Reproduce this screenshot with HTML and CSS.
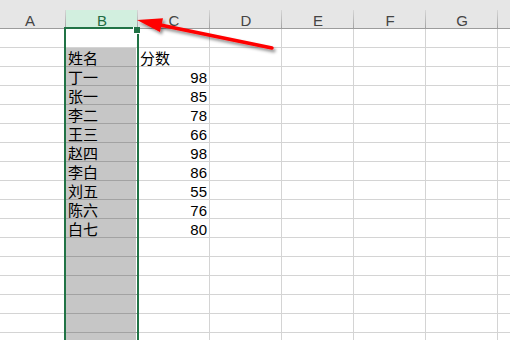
FILE: index.html
```html
<!DOCTYPE html>
<html lang="zh-CN">
<head>
    <meta charset="UTF-8">
    <meta name="viewport" content="width=device-width, initial-scale=1.0">
    <title>工作表</title>
    <link rel="stylesheet" href="styles.css">
</head>
<body>

    <div class="sheet">
        <!-- 列标题 -->
        <div class="head">
            <div class="hc">A</div>
            <div class="hc hsel">B</div>
            <div class="hc">C</div>
            <div class="hc">D</div>
            <div class="hc">E</div>
            <div class="hc">F</div>
            <div class="hc">G</div>
            <div class="hc"></div>
        </div>

        <!-- 数据行 -->
        <div class="row"><div class="c"></div><div class="c act"></div><div class="c"></div><div class="c"></div><div class="c"></div><div class="c"></div><div class="c"></div><div class="c"></div></div>
        <div class="row"><div class="c"></div><div class="c sel">姓名</div><div class="c">分数</div><div class="c"></div><div class="c"></div><div class="c"></div><div class="c"></div><div class="c"></div></div>
        <div class="row"><div class="c"></div><div class="c sel">丁一</div><div class="c num">98</div><div class="c"></div><div class="c"></div><div class="c"></div><div class="c"></div><div class="c"></div></div>
        <div class="row"><div class="c"></div><div class="c sel">张一</div><div class="c num">85</div><div class="c"></div><div class="c"></div><div class="c"></div><div class="c"></div><div class="c"></div></div>
        <div class="row"><div class="c"></div><div class="c sel">李二</div><div class="c num">78</div><div class="c"></div><div class="c"></div><div class="c"></div><div class="c"></div><div class="c"></div></div>
        <div class="row"><div class="c"></div><div class="c sel">王三</div><div class="c num">66</div><div class="c"></div><div class="c"></div><div class="c"></div><div class="c"></div><div class="c"></div></div>
        <div class="row"><div class="c"></div><div class="c sel">赵四</div><div class="c num">98</div><div class="c"></div><div class="c"></div><div class="c"></div><div class="c"></div><div class="c"></div></div>
        <div class="row"><div class="c"></div><div class="c sel">李白</div><div class="c num">86</div><div class="c"></div><div class="c"></div><div class="c"></div><div class="c"></div><div class="c"></div></div>
        <div class="row"><div class="c"></div><div class="c sel">刘五</div><div class="c num">55</div><div class="c"></div><div class="c"></div><div class="c"></div><div class="c"></div><div class="c"></div></div>
        <div class="row"><div class="c"></div><div class="c sel">陈六</div><div class="c num">76</div><div class="c"></div><div class="c"></div><div class="c"></div><div class="c"></div><div class="c"></div></div>
        <div class="row"><div class="c"></div><div class="c sel">白七</div><div class="c num">80</div><div class="c"></div><div class="c"></div><div class="c"></div><div class="c"></div><div class="c"></div></div>
        <div class="row"><div class="c"></div><div class="c sel"></div><div class="c"></div><div class="c"></div><div class="c"></div><div class="c"></div><div class="c"></div><div class="c"></div></div>
        <div class="row"><div class="c"></div><div class="c sel"></div><div class="c"></div><div class="c"></div><div class="c"></div><div class="c"></div><div class="c"></div><div class="c"></div></div>
        <div class="row"><div class="c"></div><div class="c sel"></div><div class="c"></div><div class="c"></div><div class="c"></div><div class="c"></div><div class="c"></div><div class="c"></div></div>
        <div class="row"><div class="c"></div><div class="c sel"></div><div class="c"></div><div class="c"></div><div class="c"></div><div class="c"></div><div class="c"></div><div class="c"></div></div>
        <div class="row"><div class="c"></div><div class="c sel"></div><div class="c"></div><div class="c"></div><div class="c"></div><div class="c"></div><div class="c"></div><div class="c"></div></div>
        <div class="row"><div class="c"></div><div class="c sel"></div><div class="c"></div><div class="c"></div><div class="c"></div><div class="c"></div><div class="c"></div><div class="c"></div></div>

        <!-- 选中的B列 -->
        <div class="selection"><div class="handle"></div></div>

        <!-- 红色箭头 -->
        <svg class="arrow" width="510" height="340" viewBox="0 0 510 340">
            <defs>
                <filter id="shadow" x="-20%" y="-50%" width="140%" height="200%">
                    <feDropShadow dx="2" dy="2.5" stdDeviation="1.5" flood-color="#000" flood-opacity="0.45"/>
                </filter>
            </defs>
            <g filter="url(#shadow)" fill="#ff0000">
                <line x1="158" y1="24.5" x2="272" y2="48" stroke="#ff0000" stroke-width="3.5" stroke-linecap="round"/>
                <polygon points="137,20 163,18.2 160,32"/>
            </g>
        </svg>
    </div>

</body>
</html>
```

FILE: styles.css
```css
body, html {
    margin: 0;
    padding: 0;
    height: 100%;
    overflow: hidden;
    background-color: white;
}

.sheet {
    position: relative;
    width: 510px;
    height: 340px;
    overflow: hidden;
    font-family: "Liberation Sans", "Noto Sans CJK SC", sans-serif;
    font-size: 15px;
    color: #000;
}

/* 列标题 */
.head {
    display: flex;
    align-items: flex-end;
    margin-left: -6px;
    height: 28px;
    background-color: #e6e6e6;
    border-bottom: 1px solid #9c9c9c;
}

.hc {
    flex: 0 0 72px;
    height: 18px;
    display: flex;
    align-items: flex-end;
    justify-content: center;
    line-height: 15px;
    color: #444;
    background-image: linear-gradient(#d6d6d6, #a4a4a4);
    background-size: 1px 100%;
    background-position: right top;
    background-repeat: no-repeat;
}

.hsel {
    background-color: #d2efdf;
    color: #1f6b42;
}

/* 单元格 */
.row {
    display: flex;
    margin-left: -6px;
}

.c {
    flex: 0 0 72px;
    box-sizing: border-box;
    height: 19px;
    border-right: 1px solid #d4d4d4;
    border-bottom: 1px solid #d4d4d4;
    display: flex;
    align-items: flex-end;
    padding: 0 2px;
    line-height: 15px;
    white-space: nowrap;
}

.num {
    justify-content: flex-end;
}

.sel {
    background-color: #c6c6c6;
    border-bottom-color: #a2a2a2;
    box-shadow: inset -1px 0 0 #fff;
}

/* 选区边框 */
.selection {
    position: absolute;
    left: 64px;
    top: 27px;
    width: 75px;
    bottom: 0;
    box-sizing: border-box;
    border: 2px solid #217346;
    border-bottom: none;
}

.handle {
    position: absolute;
    right: -3px;
    top: -2px;
    width: 7px;
    height: 7px;
    box-sizing: border-box;
    background-color: #217346;
    border-left: 1px solid #fff;
    border-bottom: 1px solid #fff;
}

.arrow {
    position: absolute;
    left: 0;
    top: 0;
    pointer-events: none;
}
```
